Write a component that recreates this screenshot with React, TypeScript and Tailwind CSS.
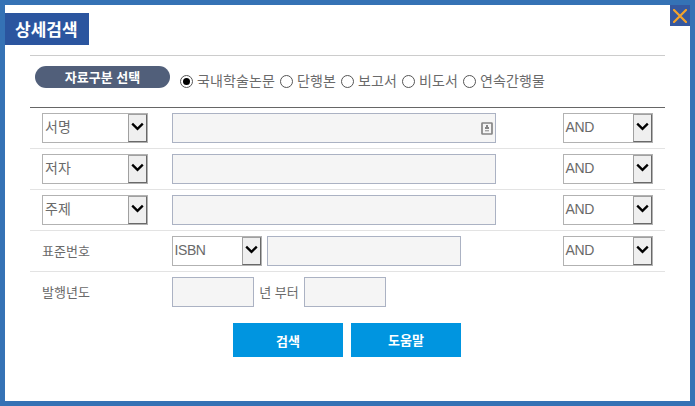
import React from "react";

function Select({ value, className }: { value: string; className: string }) {
  const latin = /^[A-Z]+$/.test(value);
  return (
    <div className={`flex h-[30px] shrink-0 border border-[#b2b2b2] bg-white ${className}`}>
      <span
        className={`flex-1 text-[14px] ${
          latin ? "pl-[1.5px] leading-[27px] tracking-[-0.4px]" : "pl-[2px] leading-[27px]"
        }`}
      >
        {value}
      </span>
      <span className="flex h-[28px] w-[19px] shrink-0 justify-center border border-t-[#a0a0a0] border-r-[#696969] border-b-[#696969] border-l-[#a0a0a0] bg-[#efefef] pt-[7px]">
        <svg width="13" height="10" viewBox="0 0 13 10" className="shrink-0" fill="none">
          <path d="M1.2 1.6 L6.5 6.9 L11.8 1.6" stroke="#000" strokeWidth="2.3" />
        </svg>
      </span>
    </div>
  );
}

function Field({ className, children }: { className: string; children?: React.ReactNode }) {
  return (
    <div
      className={`flex h-[30px] shrink-0 items-center justify-end border border-[#abb2c3] bg-[#f5f5f5] ${className}`}
    >
      {children}
    </div>
  );
}

function CardIcon() {
  return (
    <svg className="mr-[2px]" width="12" height="13" viewBox="0 0 12 13" fill="none">
      <rect x="1" y="1" width="10" height="11" rx="0.5" stroke="#858585" strokeWidth="1.7" />
      <rect x="5" y="3" width="2" height="2" fill="#858585" />
      <rect x="4" y="5" width="4" height="2" fill="#858585" />
      <rect x="4" y="8" width="4" height="1.4" fill="#a5a5a5" />
    </svg>
  );
}

const kinds = ["국내학술논문", "단행본", "보고서", "비도서", "연속간행물"];
const kindWidths = ["w-[100px]", "w-[61px]", "w-[61px]", "w-[61px]", "w-[90px]"];

export default function App() {
  return (
    <div className="h-[406px] w-[695px] overflow-hidden border-[5px] border-[#3572b5] bg-white font-['Liberation_Sans','Noto_Sans_CJK_KR',sans-serif] text-[#6a6a6a]">
      <header className="flex h-[50px] items-start justify-between">
        <h1 className="mt-[8px] h-[32px] w-[84px] bg-[#2b559f] pl-[10px] text-[17px] leading-[35px] font-bold whitespace-nowrap text-white">
          상세검색
        </h1>
        <button aria-label="닫기" className="flex h-[21px] w-[20px] items-center justify-center bg-[#3558a0]">
          <svg width="14" height="14" viewBox="0 0 14 14" fill="none">
            <path d="M1 1 L13 13 M13 1 L1 13" stroke="#f5a32a" strokeWidth="2.2" strokeLinecap="round" />
          </svg>
        </button>
      </header>

      <main className="mx-[25px] w-[635px]">
        <div className="flex h-[53px] border-t border-b border-t-[#ccc] border-b-[#666] pl-[5px]">
          <div className="mt-[10px] h-[22px] w-[135px] rounded-full bg-[#515f7a] text-center text-[13px] leading-[24px] font-bold text-white">
            자료구분 선택
          </div>
          <div className="mt-[15px] ml-[10px] flex h-[20px] items-center">
            {kinds.map((kind, i) => (
              <label key={kind} className={`flex items-center gap-[4px] ${kindWidths[i]}`}>
                <span className="mt-px flex size-[13px] shrink-0 items-center justify-center rounded-full border border-[#555] bg-white">
                  {i === 0 && <span className="size-[7px] rounded-full bg-black" />}
                </span>
                <span className="text-[14px] leading-[20px] tracking-[0.1px] whitespace-nowrap">{kind}</span>
              </label>
            ))}
          </div>
        </div>

        {["서명", "저자", "주제"].map((name, i) => (
          <div key={name} className="flex h-[41px] border-b border-[#e3e3e3] pt-[5px] pl-[12px]">
            <Select value={name} className="w-[106px]" />
            <Field className="ml-[24px] w-[324px]">{i === 0 && <CardIcon />}</Field>
            <Select value="AND" className="ml-[67px] w-[90px]" />
          </div>
        ))}

        <div className="flex h-[41px] border-b border-[#e3e3e3] pt-[5px] pl-[12px]">
          <span className="w-[130px] text-[13px] leading-[32px]">표준번호</span>
          <Select value="ISBN" className="w-[90px]" />
          <Field className="ml-[5px] w-[194px]" />
          <Select value="AND" className="ml-[102px] w-[90px]" />
        </div>

        <div className="flex h-[41px] pt-[5px] pl-[12px]">
          <span className="w-[130px] text-[13px] leading-[32px]">발행년도</span>
          <Field className="w-[82px]" />
          <span className="w-[50px] text-center text-[13px] leading-[31px]">년 부터</span>
          <Field className="w-[82px]" />
        </div>

        <div className="mt-[10px] ml-[203px] flex gap-2 text-[13px] font-bold text-white">
          <button className="h-[34px] w-[110px] bg-[#0095e0] pt-[3px]">검색</button>
          <button className="h-[34px] w-[110px] bg-[#0095e0] pt-px">도움말</button>
        </div>
      </main>
    </div>
  );
}
